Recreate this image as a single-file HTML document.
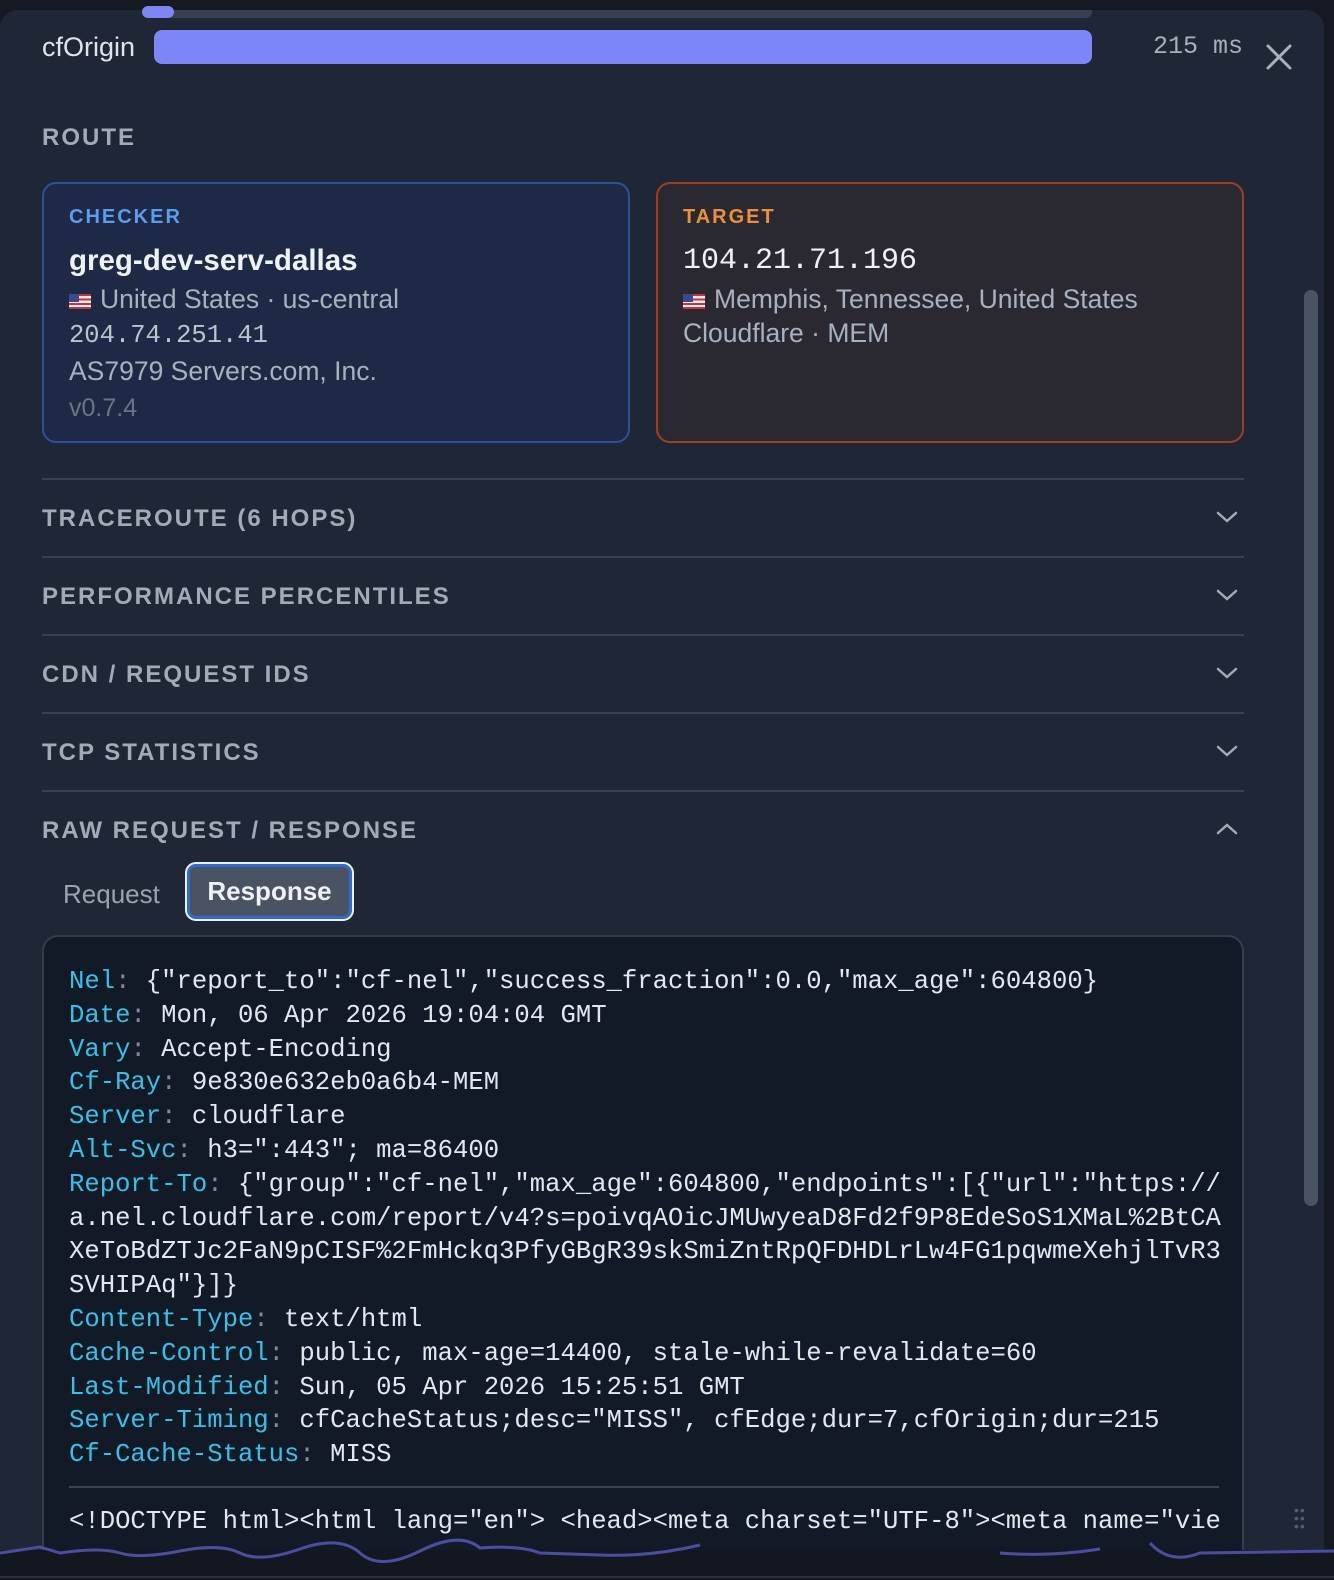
<!DOCTYPE html>
<html><head><meta charset="utf-8"><style>
*{margin:0;padding:0;box-sizing:border-box}
body{width:1334px;height:1580px;background:#141922;overflow:hidden;position:relative;font-family:"Liberation Sans",sans-serif}
.panel{position:absolute;left:0;top:10px;width:1324px;height:1540px;background:#1f2737;border-radius:18px 18px 0 0}
.abs{position:absolute}
.mono{font-family:"Liberation Mono",monospace}
.sec{position:absolute;left:42px;width:1202px;height:78px;border-top:2px solid #364152}
.sec span{position:absolute;left:0;top:25px;font-size:24px;font-weight:bold;letter-spacing:2px;color:#a1abb8}
.sec svg{position:absolute;right:6px;top:30px}
.flag{display:inline-block;width:22px;height:15px;vertical-align:-1px;margin-right:9px;background:repeating-linear-gradient(#c8303a 0 2.2px,#eee 2.2px 4.4px);position:relative}
.flag:before{content:"";position:absolute;left:0;top:0;width:10px;height:8px;background:#3c4a8c}
.code{position:absolute;left:42px;top:935px;width:1202px;height:640px;background:#131a27;border:2px solid #333d4d;border-radius:16px;overflow:hidden}
.code pre{position:absolute;left:25px;top:28px;font-family:"Liberation Mono",monospace;font-size:25.6px;line-height:33.8px;color:#e3e7ee;white-space:pre}
.k{color:#38c0e6}.c{color:#7f8a99}
</style></head><body>
<div class="panel"></div>
<div class="abs" style="left:154px;top:10px;width:938px;height:8px;background:#374151;border-radius:0 0 6px 6px"></div>
<div class="abs" style="left:142px;top:6px;width:32px;height:12px;background:#7d86f7;border-radius:6px"></div>
<div class="abs" style="left:42px;top:32px;font-size:27px;color:#dfe4ea">cfOrigin</div>
<div class="abs" style="left:154px;top:30px;width:938px;height:34px;background:#7d86f7;border-radius:8px"></div>
<div class="abs mono" style="left:1153px;top:32px;font-size:25px;color:#a7b0bc">215 ms</div>
<svg class="abs" style="left:1266px;top:44px" width="26" height="26" viewBox="0 0 26 26"><path d="M2 2L24 24M24 2L2 24" stroke="#a8b0bc" stroke-width="3" stroke-linecap="round"/></svg>
<div class="abs" style="left:42px;top:124px;font-size:24px;font-weight:bold;letter-spacing:2px;color:#a1abb8">ROUTE</div>
<div class="abs" style="left:42px;top:182px;width:588px;height:261px;background:#1e2a45;border:2px solid #2d4fa0;border-radius:14px"></div>
<div class="abs" style="left:69px;top:206px;font-size:20px;font-weight:bold;letter-spacing:2px;color:#5e9af0">CHECKER</div>
<div class="abs" style="left:69px;top:244px;font-size:29.5px;font-weight:bold;color:#eef1f5">greg-dev-serv-dallas</div>
<div class="abs" style="left:69px;top:284px;font-size:26.5px;color:#a8b1bf"><span class="flag"></span>United States · us-central</div>
<div class="abs mono" style="left:69px;top:321px;font-size:25.5px;color:#bcc3ce">204.74.251.41</div>
<div class="abs" style="left:69px;top:356px;font-size:26.5px;color:#a8b1bf">AS7979 Servers.com, Inc.</div>
<div class="abs" style="left:69px;top:394px;font-size:25px;color:#6b7482">v0.7.4</div>
<div class="abs" style="left:656px;top:182px;width:588px;height:261px;background:#2a2932;border:2px solid #9a4220;border-radius:14px"></div>
<div class="abs" style="left:683px;top:206px;font-size:20px;font-weight:bold;letter-spacing:2px;color:#ee8f3c">TARGET</div>
<div class="abs mono" style="left:683px;top:244px;font-size:30px;color:#eef1f5">104.21.71.196</div>
<div class="abs" style="left:683px;top:284px;font-size:26.5px;color:#a8b1bf"><span class="flag"></span>Memphis, Tennessee, United States</div>
<div class="abs" style="left:683px;top:318px;font-size:26.5px;color:#a8b1bf">Cloudflare · MEM</div>
<div class="sec" style="top:478px"><span>TRACEROUTE (6 HOPS)</span><svg width="22" height="14" viewBox="0 0 22 14"><path d="M2 3L11 11L20 3" fill="none" stroke="#a1abb8" stroke-width="2.5" stroke-linecap="round"/></svg></div>
<div class="sec" style="top:556px"><span>PERFORMANCE PERCENTILES</span><svg width="22" height="14" viewBox="0 0 22 14"><path d="M2 3L11 11L20 3" fill="none" stroke="#a1abb8" stroke-width="2.5" stroke-linecap="round"/></svg></div>
<div class="sec" style="top:634px"><span>CDN / REQUEST IDS</span><svg width="22" height="14" viewBox="0 0 22 14"><path d="M2 3L11 11L20 3" fill="none" stroke="#a1abb8" stroke-width="2.5" stroke-linecap="round"/></svg></div>
<div class="sec" style="top:712px"><span>TCP STATISTICS</span><svg width="22" height="14" viewBox="0 0 22 14"><path d="M2 3L11 11L20 3" fill="none" stroke="#a1abb8" stroke-width="2.5" stroke-linecap="round"/></svg></div>
<div class="sec" style="top:790px"><span>RAW REQUEST / RESPONSE</span><svg width="22" height="14" viewBox="0 0 22 14"><path d="M2 11L11 3L20 11" fill="none" stroke="#a1abb8" stroke-width="2.5" stroke-linecap="round"/></svg></div>
<div class="abs" style="left:63px;top:879px;font-size:26px;color:#9aa3b0">Request</div>
<div class="abs" style="left:187px;top:864px;width:165px;height:55px;background:#4a5363;border:3px solid #2f6ad0;outline:2px solid #eef1f5;border-radius:9px;font-size:26px;font-weight:bold;color:#eef1f5;text-align:center;line-height:49px">Response</div>
<div class="code"><pre><span class="k">Nel</span><span class="c">:</span> {"report_to":"cf-nel","success_fraction":0.0,"max_age":604800}
<span class="k">Date</span><span class="c">:</span> Mon, 06 Apr 2026 19:04:04 GMT
<span class="k">Vary</span><span class="c">:</span> Accept-Encoding
<span class="k">Cf-Ray</span><span class="c">:</span> 9e830e632eb0a6b4-MEM
<span class="k">Server</span><span class="c">:</span> cloudflare
<span class="k">Alt-Svc</span><span class="c">:</span> h3=":443"; ma=86400
<span class="k">Report-To</span><span class="c">:</span> {"group":"cf-nel","max_age":604800,"endpoints":[{"url":"https://
a.nel.cloudflare.com/report/v4?s=poivqAOicJMUwyeaD8Fd2f9P8EdeSoS1XMaL%2BtCA
XeToBdZTJc2FaN9pCISF%2FmHckq3PfyGBgR39skSmiZntRpQFDHDLrLw4FG1pqwmeXehjlTvR3
SVHIPAq"}]}
<span class="k">Content-Type</span><span class="c">:</span> text/html
<span class="k">Cache-Control</span><span class="c">:</span> public, max-age=14400, stale-while-revalidate=60
<span class="k">Last-Modified</span><span class="c">:</span> Sun, 05 Apr 2026 15:25:51 GMT
<span class="k">Server-Timing</span><span class="c">:</span> cfCacheStatus;desc="MISS", cfEdge;dur=7,cfOrigin;dur=215
<span class="k">Cf-Cache-Status</span><span class="c">:</span> MISS</pre>
<div class="abs" style="left:25px;top:549px;width:1150px;height:2px;background:#3a4352"></div>
<pre style="top:568px">&lt;!DOCTYPE html&gt;&lt;html lang="en"&gt; &lt;head&gt;&lt;meta charset="UTF-8"&gt;&lt;meta name="vie</pre>
</div>
<div class="abs" style="left:1304px;top:290px;width:14px;height:916px;background:#4a5362;border-radius:7px"></div>
<div class="abs" style="left:1294px;top:1506px;color:#555e6c;font-size:14px;line-height:8px;letter-spacing:1px">••<br>••<br>••</div>
<div class="abs" style="left:0;top:1550px;width:1334px;height:30px;background:#131820"></div>
<svg class="abs" style="left:0;top:1535px" width="1334" height="45"><path d="M0 18 Q20 15 40 12 L60 18 Q100 12 120 18 T180 16 T240 18 T300 14 T360 18 T420 16 T480 13 Q520 10 540 18 L600 20 Q650 22 700 10 M1000 18 Q1050 22 1100 14 M1150 8 Q1170 30 1200 18 L1334 16" fill="none" stroke="#4b4ea0" stroke-width="3"/><path d="M0 42H1334" stroke="#2a3140" stroke-width="2"/></svg>
</body></html>
